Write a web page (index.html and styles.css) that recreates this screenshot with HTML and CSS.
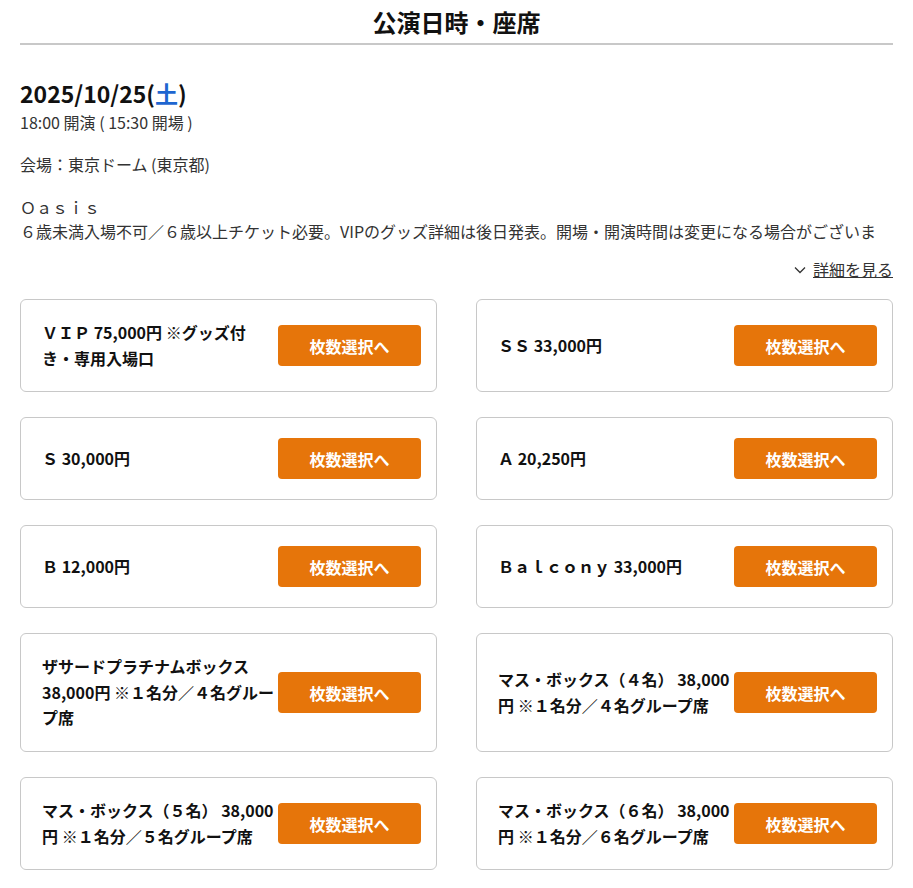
FILE: index.html
```html
<!DOCTYPE html>
<html lang="ja">
<head>
    <meta charset="UTF-8">
    <meta name="viewport" content="width=device-width, initial-scale=1.0">
    <title>公演日時・座席</title>
    <link rel="stylesheet" href="styles.css">
</head>
<body>
    <h1 class="section-title">公演日時・座席</h1>

    <div class="event">
        <p class="event-date">2025/10/25(<span class="sat">土</span>)</p>
        <p class="event-time">18:00 開演 ( 15:30 開場 )</p>
        <p class="event-venue">会場：東京ドーム (東京都)</p>
        <p class="event-name">Ｏａｓｉｓ</p>
        <p class="event-note">６歳未満入場不可／６歳以上チケット必要。VIPのグッズ詳細は後日発表。開場・開演時間は変更になる場合がございます。</p>
        <div class="more">
            <a href="#" class="more-link">
                <svg class="chevron" width="12" height="8" viewBox="0 0 12 8"><polyline points="1,1.5 6,6.5 11,1.5" fill="none" stroke="#333" stroke-width="1.3"/></svg>
                <span>詳細を見る</span>
            </a>
        </div>
    </div>

    <div class="seat-grid">
        <div class="seat-card">
            <p class="seat-name">ＶＩＰ 75,000円 ※グッズ付<br>き・専用入場口</p>
            <button class="select-btn">枚数選択へ</button>
        </div>
        <div class="seat-card">
            <p class="seat-name">ＳＳ 33,000円</p>
            <button class="select-btn">枚数選択へ</button>
        </div>
        <div class="seat-card">
            <p class="seat-name">Ｓ 30,000円</p>
            <button class="select-btn">枚数選択へ</button>
        </div>
        <div class="seat-card">
            <p class="seat-name">Ａ 20,250円</p>
            <button class="select-btn">枚数選択へ</button>
        </div>
        <div class="seat-card">
            <p class="seat-name">Ｂ 12,000円</p>
            <button class="select-btn">枚数選択へ</button>
        </div>
        <div class="seat-card">
            <p class="seat-name">Ｂａｌｃｏｎｙ 33,000円</p>
            <button class="select-btn">枚数選択へ</button>
        </div>
        <div class="seat-card">
            <p class="seat-name">ザサードプラチナムボックス 38,000円 ※１名分／４名グループ席</p>
            <button class="select-btn">枚数選択へ</button>
        </div>
        <div class="seat-card">
            <p class="seat-name">マス・ボックス（４名） 38,000円 ※１名分／４名グループ席</p>
            <button class="select-btn">枚数選択へ</button>
        </div>
        <div class="seat-card">
            <p class="seat-name">マス・ボックス（５名） 38,000円 ※１名分／５名グループ席</p>
            <button class="select-btn">枚数選択へ</button>
        </div>
        <div class="seat-card">
            <p class="seat-name">マス・ボックス（６名） 38,000円 ※１名分／６名グループ席</p>
            <button class="select-btn">枚数選択へ</button>
        </div>
    </div>
</body>
</html>
```

FILE: styles.css
```css
body {
    margin: 0;
    padding: 0 20px;
    color: #222;
    font-family: "Noto Sans CJK JP", "Noto Sans", sans-serif;
    font-size: 16px;
    background: #fff;
}
p {
    margin: 0;
}
.section-title {
    margin: 0;
    padding: 4px 0 3px;
    font-size: 24px;
    line-height: 36px;
    font-weight: bold;
    text-align: center;
    color: #111;
    border-bottom: 2px solid #c8c8c8;
}
.event {
    margin-top: 31px;
}
.event-date {
    font-size: 23px;
    line-height: 34px;
    font-weight: bold;
    color: #111;
}
.sat {
    color: #1e66d0;
}
.event-time {
    line-height: 24px;
    color: #333;
}
.event-venue {
    margin-top: 18px;
    line-height: 24px;
    color: #333;
}
.event-name {
    margin-top: 19px;
    line-height: 24px;
    color: #333;
}
/* only the first line of the note is shown */
.event-note {
    line-height: 24px;
    max-height: 24px;
    overflow: hidden;
    color: #333;
}
.more {
    margin-top: 14px;
    text-align: right;
    line-height: 24px;
}
.more-link {
    color: #333;
    font-size: 16px;
    text-decoration: none;
}
.more-link span {
    text-decoration: underline;
}
.chevron {
    margin-right: 3px;
    vertical-align: 2px;
}
.seat-grid {
    margin-top: 18px;
    display: grid;
    grid-template-columns: 1fr 1fr;
    column-gap: 39px;
    row-gap: 25px;
}
.seat-card {
    display: flex;
    align-items: center;
    padding: 20px 15px 20px 21px;
    border: 1px solid #c8c8c8;
    border-radius: 6px;
}
.seat-name {
    flex: 1;
    font-size: 16px;
    line-height: 1.6;
    font-weight: bold;
    color: #111;
}
.select-btn {
    flex: none;
    width: 143px;
    height: 41px;
    border: none;
    border-radius: 4px;
    background-color: #e6750a;
    color: #fff;
    font-family: inherit;
    font-size: 16px;
    font-weight: bold;
    cursor: pointer;
}
```
